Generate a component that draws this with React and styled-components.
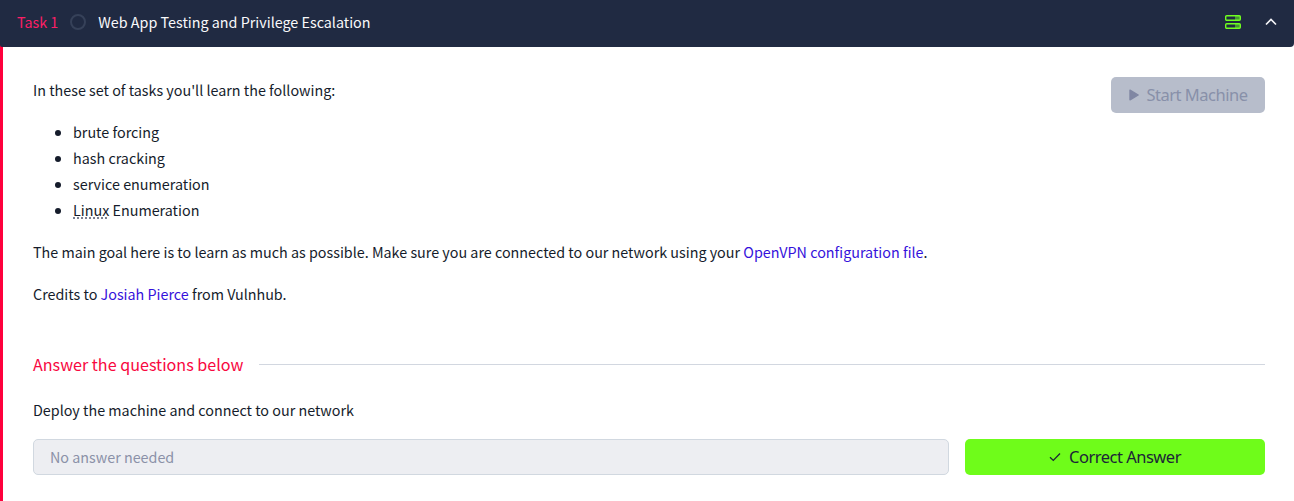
import React from "react";
import styled, { createGlobalStyle } from "styled-components";

const GlobalStyle = createGlobalStyle`
  * { box-sizing: border-box; }
  body {
    margin: 0;
    background: #fff;
    color: #151c2b;
    font-family: "Noto Sans CJK SC", "Noto Sans", sans-serif;
    font-size: 14.33px;
    line-height: 26px;
  }
`;

const Card = styled.article`
  background: linear-gradient(90deg, #ff003c 3px, #fff 3px);
`;
const Header = styled.header`
  display: flex;
  align-items: center;
  height: 47px;
  padding: 0 17px 3px;
  background: #202a42;
  color: #f9f9fb;
  border-radius: 0 0 4px 2px;
`;
const TaskNumber = styled.span`
  color: #fb1f66;
`;
const StatusRing = styled.span`
  width: 16px;
  height: 16px;
  margin: 0 12px;
  border: 2px solid #364159;
  border-radius: 50%;
`;
const TaskTitle = styled.span`
  flex: 1;
`;
const HeaderIcons = styled.div`
  display: flex;
  align-items: center;
  gap: 24px;
`;
const Body = styled.main`
  min-height: 454px;
  padding: 30px 29px 26px 33px;
`;
const Intro = styled.section`
  display: flex;
  justify-content: space-between;
  align-items: flex-start;
  height: 233px;
`;
const Copy = styled.div`
  p { margin: 0 0 16px; }
  ul { margin: 0 0 16px; padding-left: 40px; }
`;
const Term = styled.span`
  text-decoration: underline dotted #7b8090;
  text-decoration-thickness: 1.5px;
  text-underline-offset: 1px;
`;
const Link = styled.a`
  color: #3511db;
`;
const Button = styled.button`
  display: flex;
  align-items: center;
  justify-content: center;
  gap: 8px;
  width: ${(p) => p.$width}px;
  height: 36px;
  padding: 0;
  border: 0;
  border-radius: 5px;
  background: ${(p) => (p.$muted ? "#b7bdcb" : "#6ffc1a")};
  color: ${(p) => (p.$muted ? "#8890a9" : "#1c2538")};
  font: 16.5px/24px "Noto Sans", sans-serif;
  letter-spacing: -0.5px;
`;
const SectionTitle = styled.h2`
  display: flex;
  align-items: center;
  gap: 16px;
  height: 26px;
  margin: 41px 0 20px;
  color: #f8083f;
  font-size: 16.11px;
  font-weight: 400;
  &::after {
    content: "";
    flex: 1;
    height: 1px;
    background: #d2d7e0;
  }
`;
const Question = styled.p`
  margin: 0 0 16px;
`;
const AnswerRow = styled.div`
  display: flex;
  gap: 16px;
`;
const AnswerField = styled.div`
  flex: 1;
  height: 36px;
  padding: 4px 16px;
  border: 1px solid #d1d8e0;
  border-radius: 5px;
  background: #edeef2;
  color: #8b91a8;
`;

const ServerIcon = () => (
  <svg width="16" height="14" viewBox="0 0 16 14" fill="none">
    <path d="M10 1h5v4h-5zM10 9h5v4h-5z" fill="#469634" />
    <rect x="0.7" y="0.7" width="14.6" height="4.6" rx="1" stroke="#70ff20" strokeWidth="1.4" />
    <rect x="0.7" y="8.7" width="14.6" height="4.6" rx="1" stroke="#70ff20" strokeWidth="1.4" />
  </svg>
);
const ChevronIcon = () => (
  <svg width="12" height="8" viewBox="0 0 12 8" fill="none">
    <path d="m1 6.5 5-5 5 5" stroke="#f5f5f8" strokeWidth="1.7" />
  </svg>
);
const PlayIcon = () => (
  <svg width="10" height="12" viewBox="0 0 10 12">
    <path d="M1 1.2v9.6L9.2 6z" fill="#8087a3" stroke="#8087a3" strokeWidth="1.4" strokeLinejoin="round" />
  </svg>
);
const CheckIcon = () => (
  <svg width="12" height="10" viewBox="0 0 12 10" fill="none">
    <path d="m1 5.2 3.3 3.2L11 1.5" stroke="#1c2538" strokeWidth="1.3" />
  </svg>
);

export default function App() {
  return (
    <Card>
      <GlobalStyle />
      <Header>
        <TaskNumber>Task 1</TaskNumber>
        <StatusRing />
        <TaskTitle>Web App Testing and Privilege Escalation</TaskTitle>
        <HeaderIcons>
          <ServerIcon />
          <ChevronIcon />
        </HeaderIcons>
      </Header>
      <Body>
        <Intro>
          <Copy>
            <p>In these set of tasks you'll learn the following:</p>
            <ul>
              <li>brute forcing</li>
              <li>hash cracking</li>
              <li>service enumeration</li>
              <li><Term>Linux</Term> Enumeration</li>
            </ul>
            <p>
              The main goal here is to learn as much as possible. Make sure you are connected to our
              network using your <Link>OpenVPN configuration file</Link>.
            </p>
            <p>Credits to <Link>Josiah Pierce</Link> from Vulnhub.</p>
          </Copy>
          <Button $muted $width={154}>
            <PlayIcon />
            Start Machine
          </Button>
        </Intro>
        <SectionTitle>Answer the questions below</SectionTitle>
        <Question>Deploy the machine and connect to our network</Question>
        <AnswerRow>
          <AnswerField>No answer needed</AnswerField>
          <Button $width={300}>
            <CheckIcon />
            Correct Answer
          </Button>
        </AnswerRow>
      </Body>
    </Card>
  );
}
